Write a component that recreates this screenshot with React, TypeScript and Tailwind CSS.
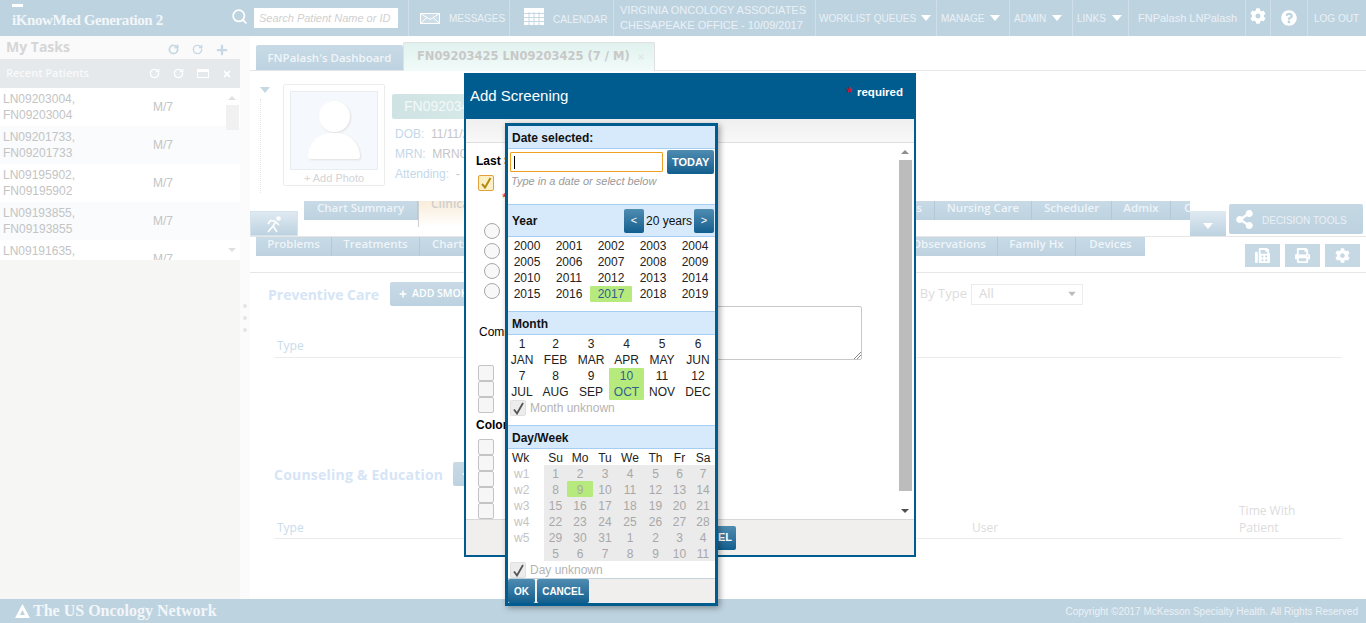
import { FaCog, FaQuestionCircle, FaShareAlt, FaFax, FaPrint, FaPlus, FaTimes } from "react-icons/fa";
import { Search, RotateCw } from "lucide-react";

const recentPatients = [
  ["LN09203004,", "FN09203004"],
  ["LN09201733,", "FN09201733"],
  ["LN09195902,", "FN09195902"],
  ["LN09193855,", "FN09193855"],
  ["LN09191635,", "FN09191635"],
];

const years = Array.from({ length: 20 }, (_, i) => 2000 + i);
const months = [
  ["1", "JAN"], ["2", "FEB"], ["3", "MAR"], ["4", "APR"], ["5", "MAY"], ["6", "JUN"],
  ["7", "JUL"], ["8", "AUG"], ["9", "SEP"], ["10", "OCT"], ["11", "NOV"], ["12", "DEC"],
];
const dayNames = ["Su", "Mo", "Tu", "We", "Th", "Fr", "Sa"];
const days = [
  1, 2, 3, 4, 5, 6, 7, 8, 9, 10, 11, 12, 13, 14, 15, 16, 17, 18, 19, 20, 21,
  22, 23, 24, 25, 26, 27, 28, 29, 30, 31, 1, 2, 3, 4, 5, 6, 7, 8, 9, 10, 11,
];

const tabClass = "flex items-start justify-center h-full bg-gradient-to-b from-[#c8dae6] to-[#bdd2e0] text-[#eef4f8] text-[11.5px] leading-[14px] font-semibold [font-family:'Open_Sans',sans-serif] border-r border-[#b2c9d8] whitespace-nowrap";

function Caret({ className }: { className: string }) {
  return <span className={"inline-block border-x-[5px] border-t-[6px] border-x-transparent " + className} />;
}

function NavCell({ width, children }: { width: string; children: React.ReactNode }) {
  return <div className={"flex items-center shrink-0 h-full border-l border-[#cfdfe9] text-[#eaf1f6] whitespace-nowrap " + width}>{children}</div>;
}

function Header() {
  return (
    <header className="flex h-9 shrink-0 bg-[#bed3e0]">
      <div className="flex items-center w-[408px] shrink-0 pl-3">
        <div className="relative w-[216px] [font-family:'Liberation_Serif',serif] font-bold text-[15px] tracking-[-0.4px] text-[#f2f6f9] pt-[4px]">
          <span className="absolute top-[-1px] left-0 w-[11px] h-[3px] bg-white" />
          iKnowMed Generation 2
        </div>
        <Search size={17} strokeWidth={2.5} className="text-white mr-[6px] -mt-1 ml-[3px]" />
        <div className="w-[144px] h-[20px] bg-white text-[11px] italic text-[#d0d0d0] pl-[5px] leading-[20px] whitespace-nowrap overflow-hidden">Search Patient Name or ID</div>
      </div>
      <NavCell width="w-[101px] pl-[11px] gap-[9px]">
        <svg width="20" height="11" viewBox="0 0 20 11" fill="none" stroke="#fff">
          <rect x="0.5" y="0.5" width="19" height="10" fill="#cddde7" />
          <path d="M0.5 0.5 L10 6.5 L19.5 0.5 M0.5 10.5 L7 4.5 M19.5 10.5 L13 4.5" />
        </svg>
        <span className="text-[10px]">MESSAGES</span>
      </NavCell>
      <NavCell width="w-[104px] pl-[14px] gap-[9px]">
        <svg width="20" height="17" viewBox="0 0 20 17" className="-mt-1">
          <rect width="20" height="17" fill="#fff" />
          <path d="M0 5.5H20M0 9.5H20M0 13.5H20M5 4V17M10 4V17M15 4V17" stroke="#c5d8e4" />
        </svg>
        <span className="text-[10px] mt-[3px]">CALENDAR</span>
      </NavCell>
      <NavCell width="w-[202px] pl-[6px]">
        <div className="leading-[15px] text-[11px]">
          <div>VIRGINIA ONCOLOGY ASSOCIATES</div>
          <div>CHESAPEAKE OFFICE - 10/09/2017</div>
        </div>
      </NavCell>
      <NavCell width="w-[121px] pl-[3px] gap-[5px]"><span className="text-[10px]">WORKLIST QUEUES</span><Caret className="border-t-white" /></NavCell>
      <NavCell width="w-[73px] pl-[4px] gap-[6px]"><span className="text-[10px]">MANAGE</span><Caret className="border-t-white" /></NavCell>
      <NavCell width="w-[63px] pl-[4px] gap-[6px]"><span className="text-[10px]">ADMIN</span><Caret className="border-t-white" /></NavCell>
      <NavCell width="w-[56px] pl-[4px] gap-[6px]"><span className="text-[10px]">LINKS</span><Caret className="border-t-white" /></NavCell>
      <NavCell width="w-[117px] pl-[9px]"><span className="text-[11px]">FNPalash LNPalash</span></NavCell>
      <NavCell width="w-[25px] pl-[4px]"><FaCog size={16} className="text-white -mt-1" /></NavCell>
      <NavCell width="w-[37px] pl-[10px]"><FaQuestionCircle size={16} className="text-white" /></NavCell>
      <NavCell width="w-[59px] pl-[6px]"><span className="text-[10px]">LOG OUT</span></NavCell>
    </header>
  );
}

function Sidebar() {
  return (
    <aside className="w-[240px] shrink-0 bg-[#f6f6f4] flex flex-col">
      <div className="flex items-center h-[23px] bg-[#fafafa] pl-[6px] pr-[12px]">
        <span className="[font-family:'Open_Sans',sans-serif] font-bold text-[14px] text-[#d6d6d6] flex-1 pb-[2px]">My Tasks</span>
        <span className="flex items-center gap-[13px] text-[#c5d8e4] mt-1">
          <RotateCw size={11} strokeWidth={4} />
          <RotateCw size={11} strokeWidth={3} />
          <FaPlus size={12} />
        </span>
      </div>
      <div className="flex items-center h-[29px] bg-[#e5e9ec] pl-[6px] pr-[8px]">
        <span className="[font-family:'Open_Sans',sans-serif] font-semibold text-[11px] text-[#f8f9fa] flex-1">Recent Patients</span>
        <span className="flex items-center gap-[13px] text-white">
          <RotateCw size={11} strokeWidth={3} />
          <RotateCw size={11} strokeWidth={3} />
          <span className="w-[12px] h-[9px] border border-white border-t-[3px]" />
          <FaTimes size={10} />
        </span>
      </div>
      <div className="relative h-[172px] overflow-hidden bg-white">
        {recentPatients.map((p, i) => (
          <div key={p[0]} className={"flex items-center h-[38px] pl-[3px] pr-[16px] text-[12px] leading-[16px] text-[#c4c4c4] " + (i % 2 === 1 ? "bg-[#f9fbfd]" : "bg-white")}>
            <div className="w-[150px]">
              <div>{p[0]}</div>
              <div>{p[1]}</div>
            </div>
            <span>M/7</span>
          </div>
        ))}
        <div className="absolute right-0 top-0 bottom-0 w-[16px] flex flex-col items-center">
          <span className="mt-[8px] border-x-[4px] border-b-[4px] border-x-transparent border-b-[#e0e0e0]" />
          <span className="mt-[5px] w-[13px] h-[25px] bg-[#f1f1f1]" />
          <span className="mt-auto mb-[8px] border-x-[4px] border-t-[4px] border-x-transparent border-t-[#e0e0e0]" />
        </div>
      </div>
    </aside>
  );
}

function PatientPanel() {
  return (
    <div className="flex h-[130px] shrink-0 overflow-hidden pl-[10px]">
      <div className="flex flex-col items-start w-[23px] pt-[16px]">
        <Caret className="border-t-[#c5d8e4]" />
        <span className="mt-[6px] h-[94px] border-l border-dotted border-[#e4e4e4]" />
      </div>
      <div className="mt-[13px] w-[102px] h-[102px] border border-[#ececec] rounded-[2px] pt-[6px] flex flex-col items-center">
        <div className="w-[88px] h-[79px] shrink-0 bg-[#f5f8fc] border border-[#e8edf2] flex flex-col items-center pt-[9px]">
          <span className="w-[31px] h-[31px] rounded-full bg-white shadow-[1px_1px_2px_#e0e0e0]" />
          <span className="mt-[1px] w-[52px] h-[26px] rounded-t-[26px] rounded-b-[3px] bg-white shadow-[1px_1px_2px_#e0e0e0]" />
        </div>
        <span className="text-[11px] text-[#d4d4d4] leading-[14px] mt-[1px]">+ Add Photo</span>
      </div>
      <div className="ml-[7px] mt-[23px] text-[12px]">
        <div className="w-[120px] h-[25px] bg-gradient-to-r from-[#cfe3e4] to-[#d9ecea] rounded-[2px] text-[#f3f8f8] text-[14px] leading-[25px] pl-[12px]">FN09203425</div>
        <div className="mt-[5px] pl-[3px] leading-[20px] text-[#c6c6c6]">
          <div><span className="text-[#c3d8ea]">DOB:</span>&nbsp; 11/11/2010</div>
          <div><span className="text-[#c3d8ea]">MRN:</span>&nbsp; MRN09203425</div>
          <div><span className="text-[#c3d8ea]">Attending:</span>&nbsp; -</div>
        </div>
      </div>
    </div>
  );
}

function ChartTabs() {
  return (
    <div className="flex h-[36px] shrink-0 border-b border-[#e6e6e6]">
      <div className="self-end flex items-center justify-center w-[48px] h-[25px] border border-[#d5e3ec] bg-gradient-to-b from-[#dfeaf2] to-[#bdd2e0]">
        <svg width="18" height="18" viewBox="0 0 18 18" fill="none" stroke="#fff" strokeWidth="1.6">
          <circle cx="13.5" cy="3.5" r="2.3" fill="#fff" stroke="none" />
          <path d="M11 6.5 L5.5 5.5 L3 9 M11 6.5 L8 11 L12 17 M8 11 L3 17 M11 7 L14 10" />
        </svg>
      </div>
      <div className="flex ml-[6px] w-[886px] h-[19px]">
        <div className={tabClass + " w-[114px]"}>Chart Summary</div>
        <div className="w-[60px] h-[26px] border-l border-[#cfcfcf] bg-gradient-to-b from-[#f9ecd9] to-white text-[12px] font-semibold text-[#cfcfcf] overflow-hidden [font-family:'Open_Sans',sans-serif] pl-[12px] leading-[6px]">Clinical</div>
        <div className="flex-1" />
        <div className={tabClass + " w-[20px] justify-end pr-[12px]"}>s</div>
        <div className={tabClass + " w-[97px]"}>Nursing Care</div>
        <div className={tabClass + " w-[80px]"}>Scheduler</div>
        <div className={tabClass + " w-[59px]"}>Admix</div>
        <div className={tabClass + " w-[19px] justify-start pl-[13px] border-r-0 overflow-hidden"}>C</div>
      </div>
      <div className="self-end flex items-center justify-center w-[36px] h-[25px] bg-gradient-to-b from-[#dfeaf2] to-[#bdd2e0]">
        <Caret className="border-t-white mt-1" />
      </div>
      <button className="mt-[3px] ml-[3px] w-[134px] h-[30px] rounded-[2px] bg-gradient-to-b from-[#c5d8e4] to-[#bdd2e0] flex items-center text-[#eaf1f6] text-[10px] pl-[6px] gap-[8px]">
        <FaShareAlt size={19} className="text-white" />
        <span className="pt-[2px]">DECISION TOOLS</span>
      </button>
    </div>
  );
}

function SubTabs() {
  return (
    <div className="flex h-[36px] shrink-0 border-b border-[#e6e6e6] pl-[6px]">
      <div className="flex w-[889px] h-[19px]">
        <div className={tabClass + " w-[76px]"}>Problems</div>
        <div className={tabClass + " w-[88px]"}>Treatments</div>
        <div className={tabClass + " w-[60px] justify-start pl-[12px] overflow-hidden border-r-0"}>Charts</div>
        <div className="flex-1 bg-[#bdd2e0]" />
        <div className={tabClass + " w-[93px] justify-start pl-[7px]"}>Observations</div>
        <div className={tabClass + " w-[78px]"}>Family Hx</div>
        <div className={tabClass + " w-[69px] border-r-0"}>Devices</div>
      </div>
      <div className="ml-[100px] mt-[7px] flex gap-[5px] text-white">
        <span className="flex items-center justify-center w-[35px] h-[23px] bg-[#c5d8e4]"><FaFax size={15} /></span>
        <span className="flex items-center justify-center w-[35px] h-[23px] bg-[#c5d8e4]"><FaPrint size={15} /></span>
        <span className="flex items-center justify-center w-[35px] h-[23px] bg-[#c5d8e4]"><FaCog size={15} /></span>
      </div>
    </div>
  );
}

function ActionButton({ label, width }: { label: string; width: string }) {
  return (
    <button className={"h-[24px] rounded-[2px] bg-gradient-to-b from-[#c8dae6] to-[#bdd2e0] text-white text-[10.5px] font-semibold [font-family:'Open_Sans',sans-serif] flex items-center pl-[9px] gap-[5px] whitespace-nowrap overflow-hidden " + width}>
      <FaPlus size={8} />
      {label}
    </button>
  );
}

function Content() {
  const heading = "[font-family:'Open_Sans',sans-serif] font-bold text-[14px] text-[#d6e5f6]";
  return (
    <main className="flex-1 flex flex-col min-w-0 bg-white">
      <div className="flex items-end h-[35px] shrink-0 pl-[6px] border-b border-[#e6e6e6]">
        <div className="flex items-center justify-center w-[147px] h-[25px] rounded-t-[2px] bg-gradient-to-b from-[#c8dae6] to-[#bdd2e0] text-[#f0f5f8] text-[11.5px] font-semibold [font-family:'Open_Sans',sans-serif]">FNPalash's Dashboard</div>
        <div className="flex items-center w-[252px] h-[29px] -mb-px border border-b-0 border-[#e0e0e0] rounded-t-[2px] bg-gradient-to-b from-[#e0f2ee] to-[#f2fbfa] text-[#c8c8c8] text-[11.5px] font-bold pl-[13px] [font-family:'DejaVu_Sans',sans-serif] whitespace-nowrap">
          FN09203425 LN09203425 (7 / M)
          <FaTimes size={8} className="ml-[7px] text-[#dde8e8]" />
        </div>
      </div>
      <PatientPanel />
      <ChartTabs />
      <SubTabs />
      <div className="flex items-center h-[40px] mt-[1px] shrink-0 pl-[18px]">
        <span className={heading + " w-[122px]"}>Preventive Care</span>
        <ActionButton label="ADD SMOKING" width="w-[150px]" />
        <span className="ml-auto text-[13px] text-[#dcdcdc] mr-[4px] [font-family:'Open_Sans',sans-serif]">Filter By Type</span>
        <div className="flex items-center justify-between w-[112px] h-[21px] border border-[#ececec] text-[13px] text-[#d8d8d8] pl-[7px] pr-[5px] mr-[283px] [font-family:'Open_Sans',sans-serif]">
          All
          <Caret className="border-t-[#bcbcbc] scale-75" />
        </div>
      </div>
      <div className="mt-[20px] ml-[24px] mr-[24px] h-[24px] shrink-0 border-b border-[#ececec] text-[12px] text-[#c9dcec] [font-family:'Open_Sans',sans-serif] pl-[3px] flex items-center">Type</div>
      <div className="flex items-center h-[24px] mt-[104px] shrink-0 pl-[24px]">
        <span className={heading + " w-[179px] tracking-[0.22px]"}>Counseling &amp; Education</span>
        <ActionButton label="ADD" width="w-[60px]" />
      </div>
      <div className="mt-[18px] ml-[24px] mr-[24px] h-[35px] shrink-0 border-b border-[#ececec] text-[12px] text-[#dcdcdc] [font-family:'Open_Sans',sans-serif] flex items-end pb-[2px] pl-[3px] leading-[17px]">
        <span className="text-[#c9dcec] w-[695px]">Type</span>
        <span className="w-[267px]">User</span>
        <span>Time With<br />Patient</span>
      </div>
    </main>
  );
}

function ModalCheck() {
  return <span className="block w-[16px] h-[16px] border border-[#c4c4c4] rounded-[2px] bg-[#f6f6f6] shrink-0" />;
}

function AddScreeningModal() {
  return (
    <div className="absolute left-[464px] top-[73px] w-[452px] h-[484px] border-2 border-t-0 border-[#005b8e] bg-white flex flex-col">
      <div className="flex items-start justify-between h-[46px] shrink-0 bg-[#005b8e] text-white pl-[4px] pr-[11px]">
        <span className="text-[15px] mt-[12px]">Add Screening</span>
        <span className="text-[11.5px] font-bold mt-[11px] flex items-start gap-[5px]"><span className="text-[#d4102c] text-[15px] leading-[15px]">*</span> required</span>
      </div>
      <div className="h-[24px] shrink-0 bg-gradient-to-b from-[#efefef] to-[#f8f8f8] border-b border-[#dedede]" />
      <div className="relative flex-1 overflow-hidden pl-[10px] text-[12px] text-black">
        <div className="font-bold mt-[11px] leading-[14px]">Last Screening</div>
        <div className="mt-[7px] ml-[2px] w-[16px] h-[16px] border border-[#e2a03a] rounded-[2px] bg-[#fdf0c4] flex items-center justify-center text-[#b58a10]">
          <svg width="12" height="12" viewBox="0 0 12 12" fill="none" stroke="currentColor" strokeWidth="2"><path d="M2 7 L5 10.5 L10.5 1" /></svg>
        </div>
        <div className="text-[#e02020] ml-[26px] leading-[10px] mt-[2px]">*</div>
        <div className="mt-[20px] ml-[8px] flex flex-col gap-[4px]">
          {[0, 1, 2, 3].map((i) => (
            <span key={i} className="block w-[16px] h-[16px] rounded-full border border-[#a8a8a8] bg-[#f8f8f8]" />
          ))}
        </div>
        <div className="mt-[26px] ml-[3px] leading-[14px]">Comments</div>
        <div className="absolute left-[251px] top-[163px] w-[145px] h-[54px] border border-[#c8c8c8] rounded-[2px]">
          <svg width="8" height="8" viewBox="0 0 8 8" className="absolute right-0 bottom-0" stroke="#888"><path d="M1 8 L8 1 M4 8 L8 4" /></svg>
        </div>
        <div className="mt-[26px] ml-[2px] flex flex-col">
          <ModalCheck />
          <ModalCheck />
          <ModalCheck />
        </div>
        <div className="font-bold mt-[5px] leading-[14px]">Colonoscopy</div>
        <div className="mt-[7px] ml-[2px] flex flex-col">
          <ModalCheck />
          <ModalCheck />
          <ModalCheck />
          <ModalCheck />
          <ModalCheck />
        </div>
        <div className="absolute right-[2px] top-0 bottom-0 w-[14px] flex flex-col items-center pt-[7px]">
          <span className="border-x-[4px] border-b-[4px] border-x-transparent border-b-[#8f8f8f]" />
          <span className="mt-[6px] w-[13px] h-[331px] bg-[#bcbcbc]" />
          <span className="mt-auto mb-[6px] border-x-[4px] border-t-[4px] border-x-transparent border-t-[#505050]" />
        </div>
      </div>
      <div className="flex items-center h-[36px] shrink-0 bg-[#f0efee] border-t border-[#d8d8d8] pl-[246px]">
        <span className="w-[24px] h-[24px] rounded-r-[2px] bg-gradient-to-b from-[#4e8cb1] to-[#0f5f8f] text-white text-[11px] font-bold flex items-center pl-[6px]">EL</span>
      </div>
    </div>
  );
}

function CalSection({ title, right, className }: { title: string; right?: React.ReactNode; className: string }) {
  return (
    <div className={"flex items-center justify-between shrink-0 bg-[#d7eafc] border-y border-[#a6cef2] pl-[4px] pr-[1px] text-[12px] font-bold text-[#111] " + className}>
      {title}
      {right}
    </div>
  );
}

function BlueButton({ label, className }: { label: string; className: string }) {
  return (
    <button className={"flex items-center justify-center rounded-[2px] bg-gradient-to-b from-[#4e8cb1] to-[#0f5f8f] text-white " + className}>{label}</button>
  );
}

function UnknownRow({ label }: { label: string }) {
  return (
    <div className="flex items-center gap-[4px] h-[16px] pl-[2px] text-[12px] text-[#b4b4b4]">
      <span className="w-[16px] h-[16px] rounded-[2px] bg-[#ececec] border border-[#e0e0e0] flex items-center justify-center text-[#555]">
        <svg width="13" height="13" viewBox="0 0 13 13" fill="none" stroke="currentColor" strokeWidth="1.8"><path d="M2 7.5 L5 11.5 L11 1" /></svg>
      </span>
      {label}
    </div>
  );
}

function DatePicker() {
  return (
    <div className="absolute left-[505px] top-[123px] w-[213px] h-[483px] border-[3px] border-[#005b8e] bg-white flex flex-col overflow-hidden shadow-[2px_2px_6px_rgba(0,0,0,0.35)] text-[12px] text-[#222]">
      <CalSection title="Date selected:" className="h-[23px] border-t-0 pt-[2px]" />
      <div className="h-[55px] shrink-0 pl-[2px] pr-[1px] pt-[1px]">
        <div className="flex gap-[4px]">
          <div className="flex items-center w-[154px] h-[20px] mt-[2px] border border-[#f0a020] rounded-[1px] pl-[3px]">
            <span className="w-px h-[13px] bg-black" />
          </div>
          <BlueButton label="TODAY" className="w-[47px] h-[24px] text-[11px] font-bold" />
        </div>
        <div className="text-[11px] italic text-[#9a9a9a] leading-[14px] pl-[1px]">Type in a date or select below</div>
      </div>
      <CalSection
        title="Year"
        className="h-[33px]"
        right={
          <span className="flex items-center gap-[2px] font-normal">
            <BlueButton label="<" className="w-[20px] h-[24px] text-[11px]" />
            <span className="text-[12px]">20 years</span>
            <BlueButton label=">" className="w-[20px] h-[24px] text-[11px]" />
          </span>
        }
      />
      <div className="grid grid-cols-[repeat(5,42px)] h-[74px] shrink-0 pt-[1px] -ml-[2px] content-start">
        {years.map((y) => (
          <span key={y} className={"h-[16px] leading-[16px] text-center rounded-[1px] " + (y === 2017 ? "bg-[#b6ea7c] text-[#2f5f8f]" : "")}>{y}</span>
        ))}
      </div>
      <CalSection title="Month" className="h-[24px] pt-[2px]" />
      <div className="grid grid-cols-[32px_35px_36px_35px_36px_36px] shrink-0 pt-[1px] -ml-[2px]">
        {months.map(([num, name]) => (
          <span key={name} className={"h-[32px] leading-[16px] text-center rounded-[1px] " + (name === "OCT" ? "bg-[#b6ea7c] text-[#2f5f8f]" : "")}>
            {num}
            <br />
            {name}
          </span>
        ))}
      </div>
      <div className="h-[17px] shrink-0"><UnknownRow label="Month unknown" /></div>
      <CalSection title="Day/Week" className="h-[24px] mt-[8px] pt-[2px]" />
      <div className="flex shrink-0">
        <div className="w-[37px] leading-[18px] text-[#c4c4c4]">
          <div className="text-[#222] h-[16px] pl-[4px]">Wk</div>
          {["w1", "w2", "w3", "w4", "w5"].map((w) => <div key={w} className="h-[16px] pl-[6px]">{w}</div>)}
        </div>
        <div className="grid grid-cols-[23px_26px_24px_26px_25px_23px_24px] w-[171px] leading-[18px] text-center">
          {dayNames.map((d) => <span key={d} className="h-[16px]">{d}</span>)}
          {days.map((d, i) => (
            <span key={i} className={"h-[16px] text-[#a8a8a8] " + (i === 8 ? "bg-[#b6ea7c] rounded-[1px]" : "bg-[#ebebeb]")}>{d}</span>
          ))}
        </div>
      </div>
      <div className="h-[17px] shrink-0 pt-px"><UnknownRow label="Day unknown" /></div>
      <div className="flex flex-1 gap-[2px] bg-[#f0efee] border-t border-[#c4d2dc] items-start">
        <BlueButton label="OK" className="w-[27px] h-[24px] text-[10px] font-bold" />
        <BlueButton label="CANCEL" className="w-[52px] h-[24px] text-[10px] font-bold" />
      </div>
    </div>
  );
}

export default function App() {
  return (
    <div className="relative flex flex-col w-[1366px] h-[623px] overflow-hidden bg-white [font-family:'Liberation_Sans',Arial,sans-serif]">
      <Header />
      <div className="flex flex-1 min-h-0">
        <Sidebar />
        <div className="flex flex-col items-center justify-center gap-[8px] w-[10px] shrink-0 bg-[#fbfbfb]">
          <span className="w-[4px] h-[4px] rounded-full bg-[#e4e4e4]" />
          <span className="w-[4px] h-[4px] rounded-full bg-[#e4e4e4]" />
          <span className="w-[4px] h-[4px] rounded-full bg-[#e4e4e4]" />
        </div>
        <Content />
      </div>
      <footer className="flex items-center justify-between h-6 shrink-0 bg-[#bed3e0] pl-[15px] pr-[8px]">
        <div className="flex items-center gap-[3px] text-[#f2f6f9] [font-family:'Liberation_Serif',serif] font-bold text-[16px]">
          <svg width="15" height="14" viewBox="0 0 15 14"><path d="M7.5 0 L15 14 H0 Z M7.5 6 L5 11 H10 Z" fill="#fff" fillRule="evenodd" /></svg>
          The US Oncology Network
        </div>
        <span className="text-[10px] text-[#eaf1f6]">Copyright ©2017 McKesson Specialty Health. All Rights Reserved</span>
      </footer>
      <AddScreeningModal />
      <DatePicker />
    </div>
  );
}
